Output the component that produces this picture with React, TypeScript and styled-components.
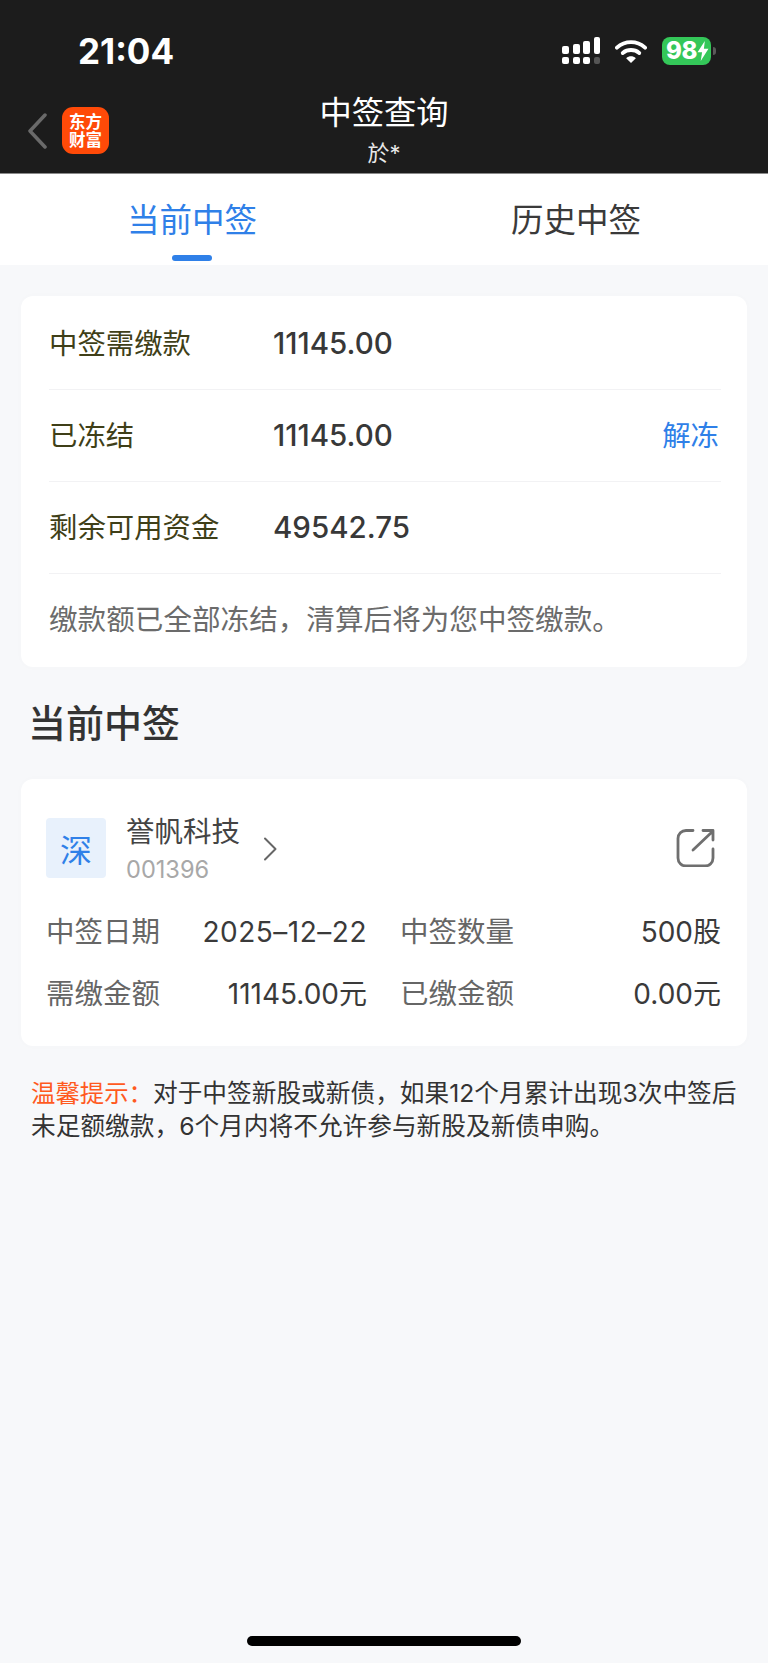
import React from "react";
import styled, { createGlobalStyle } from "styled-components";

const Global = createGlobalStyle`
  html, body { margin: 0; padding: 0; background: #f7f8fa; }
  * { box-sizing: border-box; }
  body { font-family: Inter, "Noto Sans CJK SC", sans-serif; }
`;

const Page = styled.div`
  width: 768px;
  height: 1663px;
  display: flex;
  flex-direction: column;
  overflow: hidden;
  background: #f7f8fa;
`;
const Header = styled.header`
  height: 174px;
  background: #1c1c1c;
  border-bottom: 1px solid #8a8a8a;
  flex: none;
`;
const StatusBar = styled.div`
  height: 100px;
  padding: 34px 57px 0 78px;
  display: flex;
  justify-content: space-between;
  align-items: flex-start;
`;
const Clock = styled.span`
  color: #fff;
  font-size: 35px;
  font-weight: 700;
  line-height: 34px;
`;
const StatusIcons = styled.div`
  display: flex;
  align-items: center;
  margin-top: 3px;
  gap: 15px;
`;
const Battery = styled.div`
  width: 49px;
  height: 28px;
  border-radius: 8px;
  background: #34c759;
  color: #fff;
  display: flex;
  align-items: center;
  padding-left: 4px;
  font-size: 24px;
  font-weight: 800;
  line-height: 28px;
  letter-spacing: -0.5px;
  position: relative;
  &::after {
    content: "";
    position: absolute;
    right: -5px;
    top: 10px;
    width: 3px;
    height: 8px;
    border-radius: 0 3px 3px 0;
    background: #5a5a5a;
  }
`;
const NavBar = styled.div`
  display: grid;
  grid-template-columns: 1fr auto 1fr;
`;
const NavLeft = styled.div`
  display: flex;
  align-items: center;
  gap: 15px;
  height: 59px;
  margin-top: 1px;
  padding-left: 27px;
`;
const Logo = styled.div`
  width: 47px;
  height: 47px;
  border-radius: 11px;
  background: #ff4a08;
  color: #fff;
  font-size: 16.5px;
  font-weight: 700;
  line-height: 18px;
  text-align: center;
  padding-top: 5px;
  font-family: "Noto Sans CJK SC", sans-serif;
`;
const NavTitle = styled.div`
  margin-top: -10px;
  text-align: center;
  color: #fff;
`;
const TitleMain = styled.div`
  font-size: 32.3px;
  line-height: 46px;
`;
const TitleSub = styled.div`
  font-size: 22px;
  line-height: 26px;
  color: #e8e8e8;
  margin-top: 4px;
`;
const Tabs = styled.nav`
  height: 91px;
  background: #fff;
  display: grid;
  grid-template-columns: 384px 384px;
  flex: none;
`;
const Tab = styled.div<{ $active?: boolean }>`
  position: relative;
  text-align: center;
  font-size: 32.5px;
  line-height: 46px;
  padding-top: 24px;
  color: ${(p) => (p.$active ? "#2f80e8" : "#3a3a3a")};
  ${(p) =>
    p.$active &&
    `&::after {
      content: "";
      position: absolute;
      left: 172px;
      top: 81px;
      width: 40px;
      height: 6px;
      border-radius: 3px;
      background: #2f80e8;
    }`}
`;
const Content = styled.main`
  flex: 1;
  padding: 31px 21px 0;
`;
const Card = styled.section`
  background: #fff;
  border-radius: 12px;
  box-shadow: 0 0 8px rgba(0, 0, 0, 0.015);
`;
const SummaryCard = styled(Card)`
  padding: 2px 26px 0 28px;
  height: 371px;
`;
const SummaryRow = styled.div`
  height: 92px;
  border-bottom: 1px solid #f2f2f4;
  display: flex;
  align-items: center;
  padding-bottom: 2px;
`;
const SummaryLabel = styled.span`
  width: 224px;
  font-size: 28.4px;
  color: #3f3f18;
  margin-top: -2px;
`;
const SummaryValue = styled.span`
  flex: 1;
  font-size: 29.5px;
  font-weight: 500;
  color: #383838;
  margin-top: 1px;
`;
const Action = styled.span`
  font-size: 28.4px;
  color: #2f80e8;
  margin-right: 2px;
  margin-top: -2px;
`;
const Note = styled.p`
  margin: 0;
  font-size: 28.6px;
  line-height: 40px;
  padding: 26px 0 0;
  color: #6b6b6b;
`;
const SectionTitle = styled.h2`
  margin: 34px 0 0 7px;
  font-size: 38px;
  line-height: 44px;
  height: 78px;
  font-weight: 500;
  color: #333;
`;
const HoldingCard = styled(Card)`
  padding: 39px 27px 0 25px;
  height: 267px;
`;
const Holding = styled.div`
  display: flex;
  align-items: flex-start;
`;
const Market = styled.div`
  width: 60px;
  height: 60px;
  border-radius: 4px;
  background: #e8f1fc;
  color: #2f80e8;
  font-size: 32px;
  display: flex;
  align-items: center;
  justify-content: center;
  flex: none;
`;
const StockInfo = styled.div`
  margin-left: 20px;
  margin-top: -6px;
`;
const StockName = styled.div`
  font-size: 28.5px;
  line-height: 40px;
  color: #444;
`;
const StockCode = styled.div`
  font-size: 23.6px;
  line-height: 30px;
  color: #a8a8a8;
  margin-top: 3px;
`;
const Chevron = styled.svg`
  margin: 19px 0 0 23px;
  flex: none;
`;
const OpenIcon = styled.svg`
  margin: 11px 4px 0 auto;
  flex: none;
`;
const Facts = styled.div`
  display: grid;
  grid-template-columns: 321px 321px;
  column-gap: 33px;
  row-gap: 22px;
  margin-top: 27px;
`;
const Fact = styled.div`
  display: flex;
  justify-content: space-between;
  align-items: center;
  line-height: 40px;
`;
const FactLabel = styled.span`
  font-size: 28.5px;
  color: #666;
`;
const FactValue = styled.span`
  font-size: 28px;
  color: #3a3a3a;
`;
const DateValue = styled(FactValue)`
  letter-spacing: 0.5px;
`;
const Tip = styled.p`
  margin: 31px 0 0 10px;
  width: 715px;
  font-size: 24.7px;
  line-height: 33px;
  color: #333;
`;
const TipLead = styled.span`
  font-size: 24.4px;
  color: #ff5a1f;
`;
const HomeBar = styled.div`
  width: 274px;
  height: 10px;
  border-radius: 5px;
  background: #000;
  flex: none;
  margin: 0 0 17px 247px;
`;

export default function App() {
  return (
    <Page>
      <Global />
      <Header>
        <StatusBar>
          <Clock>21:04</Clock>
          <StatusIcons>
            <svg width="38" height="28" viewBox="0 0 38 28">
              <rect x="0" y="20" width="7" height="7" rx="2" fill="#fff" />
              <rect x="11" y="20" width="7" height="7" rx="2" fill="#fff" />
              <rect x="21" y="20" width="7" height="7" rx="2" fill="#fff" />
              <rect x="32" y="20" width="6" height="7" rx="2" fill="#555" />
              <rect x="0" y="9" width="7" height="8" rx="2" fill="#fff" />
              <rect x="11" y="7" width="7" height="10" rx="2" fill="#fff" />
              <rect x="21" y="4" width="7" height="13" rx="2" fill="#fff" />
              <rect x="32" y="0" width="6" height="17" rx="2" fill="#fff" />
            </svg>
            <svg width="32" height="26" viewBox="0 0 33 26">
              <path d="M2 9.500C10.500 2 22.500 2 31 9.500" fill="none" stroke="#fff" strokeWidth="4" strokeLinecap="round" />
              <path d="M8 15C13 11 20 11 25 15" fill="none" stroke="#fff" strokeWidth="4" strokeLinecap="round" />
              <path d="M11.500 20.500C14.500 17.800 18.500 17.800 21.500 20.500L16.500 25.500Z" fill="#fff" />
            </svg>
            <Battery>
              98
              <svg width="12" height="20" viewBox="0 0 13 22">
                <path d="M8.500 0L0.500 12.500H5.500L4 22L12.500 8.500H7.500Z" fill="#fff" />
              </svg>
            </Battery>
          </StatusIcons>
        </StatusBar>
        <NavBar>
          <NavLeft>
            <svg width="20" height="36" viewBox="0 0 20 36">
              <path d="M18 2L3 18L18 34" fill="none" stroke="#6a6a6a" strokeWidth="3.500" strokeLinecap="round" strokeLinejoin="round" />
            </svg>
            <Logo>
              东方
              <br />
              财富
            </Logo>
          </NavLeft>
          <NavTitle>
            <TitleMain>中签查询</TitleMain>
            <TitleSub>於*</TitleSub>
          </NavTitle>
        </NavBar>
      </Header>
      <Tabs>
        <Tab $active>当前中签</Tab>
        <Tab>历史中签</Tab>
      </Tabs>
      <Content>
        <SummaryCard>
          <SummaryRow>
            <SummaryLabel>中签需缴款</SummaryLabel>
            <SummaryValue>11145.00</SummaryValue>
          </SummaryRow>
          <SummaryRow>
            <SummaryLabel>已冻结</SummaryLabel>
            <SummaryValue>11145.00</SummaryValue>
            <Action>解冻</Action>
          </SummaryRow>
          <SummaryRow>
            <SummaryLabel>剩余可用资金</SummaryLabel>
            <SummaryValue>49542.75</SummaryValue>
          </SummaryRow>
          <Note>缴款额已全部冻结，清算后将为您中签缴款。</Note>
        </SummaryCard>
        <SectionTitle>当前中签</SectionTitle>
        <HoldingCard>
          <Holding>
            <Market>深</Market>
            <StockInfo>
              <StockName>誉帆科技</StockName>
              <StockCode>001396</StockCode>
            </StockInfo>
            <Chevron width="14" height="24" viewBox="0 0 14 24">
              <path d="M2 1.500L12.500 12L2 22.500" fill="none" stroke="#666" strokeWidth="2" strokeLinecap="round" strokeLinejoin="round" />
            </Chevron>
            <OpenIcon width="40" height="38" viewBox="0 0 40 38">
              <path
                d="M17 1.500H10C5.600 1.500 2 5 2 9.500V29C2 33.500 5.600 37 10 37H29C33.500 37 37 33.500 37 29V20"
                fill="none"
                stroke="#6f6f6f"
                strokeWidth="2.800"
                strokeLinecap="round"
              />
              <path d="M17 21L36.500 2.500M27 1.500H37V11" fill="none" stroke="#6f6f6f" strokeWidth="2.800" strokeLinecap="round" strokeLinejoin="round" />
            </OpenIcon>
          </Holding>
          <Facts>
            <Fact>
              <FactLabel>中签日期</FactLabel>
              <DateValue>2025–12–22</DateValue>
            </Fact>
            <Fact>
              <FactLabel>中签数量</FactLabel>
              <FactValue>500股</FactValue>
            </Fact>
            <Fact>
              <FactLabel>需缴金额</FactLabel>
              <FactValue>11145.00元</FactValue>
            </Fact>
            <Fact>
              <FactLabel>已缴金额</FactLabel>
              <FactValue>0.00元</FactValue>
            </Fact>
          </Facts>
        </HoldingCard>
        <Tip>
          <TipLead>温馨提示：</TipLead>
          对于中签新股或新债，如果12个月累计出现3次中签后未足额缴款，6个月内将不允许参与新股及新债申购。
        </Tip>
      </Content>
      <HomeBar />
    </Page>
  );
}
